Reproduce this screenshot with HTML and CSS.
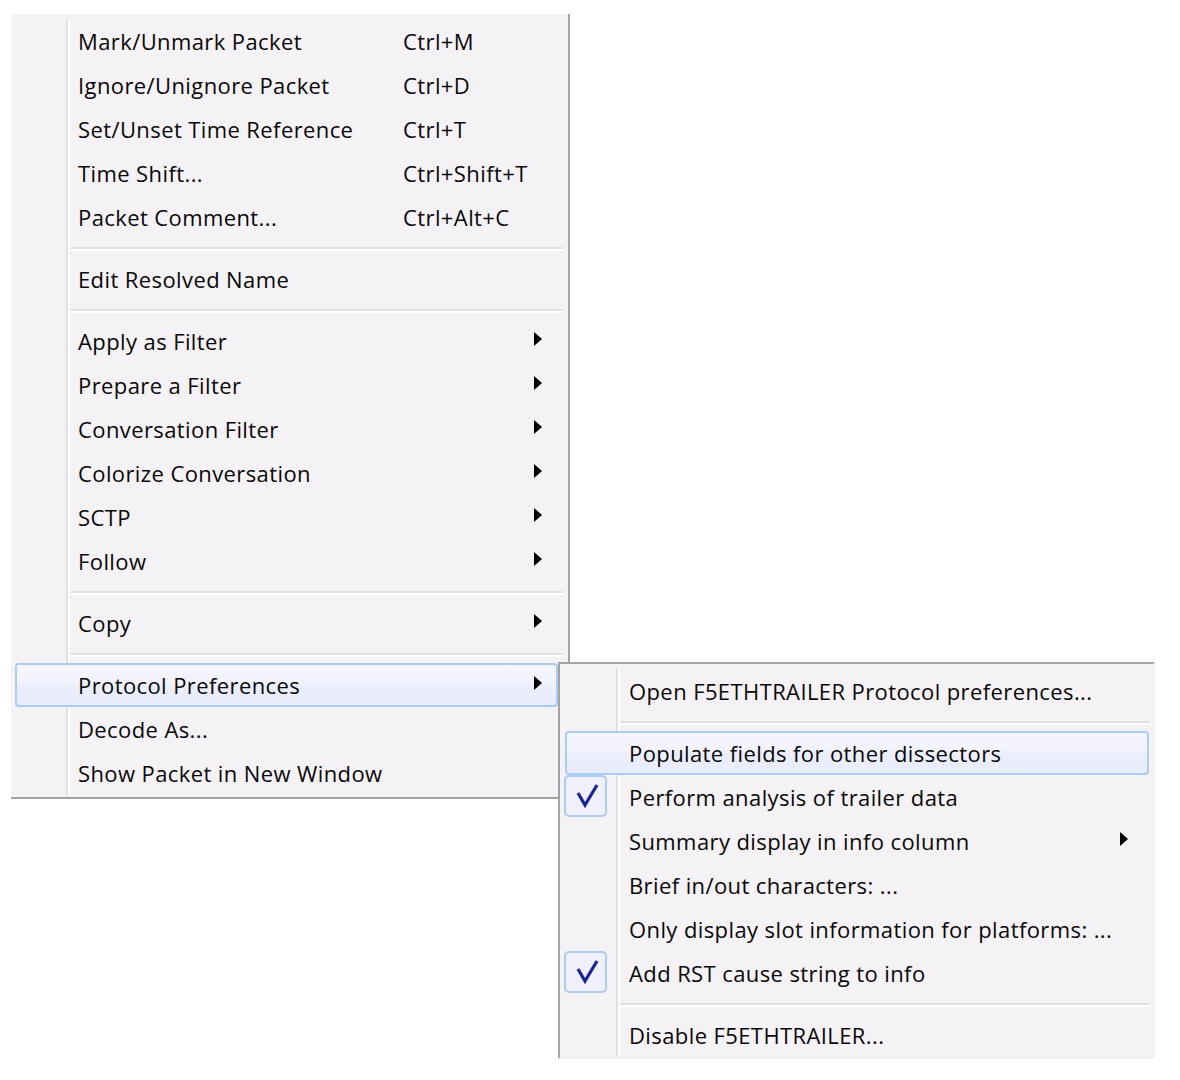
FILE: index.html
```html
<!DOCTYPE html>
<html>
<head>
<meta charset="utf-8">
<link rel="stylesheet" href="styles.css">
</head>
<body>
<div class="menu main">
  <div class="list">
    <div class="item"><span class="label">Mark/Unmark Packet</span><span class="key">Ctrl+M</span></div>
    <div class="item"><span class="label">Ignore/Unignore Packet</span><span class="key">Ctrl+D</span></div>
    <div class="item"><span class="label">Set/Unset Time Reference</span><span class="key">Ctrl+T</span></div>
    <div class="item"><span class="label">Time Shift...</span><span class="key">Ctrl+Shift+T</span></div>
    <div class="item"><span class="label">Packet Comment...</span><span class="key">Ctrl+Alt+C</span></div>
    <div class="sep"></div>
    <div class="item"><span class="label">Edit Resolved Name</span></div>
    <div class="sep"></div>
    <div class="item"><span class="label">Apply as Filter</span><span class="arrow"></span></div>
    <div class="item"><span class="label">Prepare a Filter</span><span class="arrow"></span></div>
    <div class="item"><span class="label">Conversation Filter</span><span class="arrow"></span></div>
    <div class="item"><span class="label">Colorize Conversation</span><span class="arrow"></span></div>
    <div class="item"><span class="label">SCTP</span><span class="arrow"></span></div>
    <div class="item"><span class="label">Follow</span><span class="arrow"></span></div>
    <div class="sep"></div>
    <div class="item"><span class="label">Copy</span><span class="arrow"></span></div>
    <div class="sep"></div>
    <div class="item hl"><span class="label">Protocol Preferences</span><span class="arrow"></span></div>
    <div class="item"><span class="label">Decode As...</span></div>
    <div class="item"><span class="label">Show Packet in New Window</span></div>
  </div>
</div>

<div class="menu sub">
  <div class="list">
    <div class="item"><span class="gut"></span><span class="label">Open F5ETHTRAILER Protocol preferences...</span></div>
    <div class="sep"></div>
    <div class="item hl"><span class="gut"></span><span class="label">Populate fields for other dissectors</span></div>
    <div class="item"><span class="gut"><span class="check"><svg width="39" height="38" viewBox="0 0 39 38"><polyline points="12,16 19,28 31,8" fill="none" stroke="#1c2494" stroke-width="3.2" stroke-linejoin="miter"/></svg></span></span><span class="label">Perform analysis of trailer data</span></div>
    <div class="item"><span class="gut"></span><span class="label">Summary display in info column</span><span class="arrow"></span></div>
    <div class="item"><span class="gut"></span><span class="label">Brief in/out characters: ...</span></div>
    <div class="item"><span class="gut"></span><span class="label">Only display slot information for platforms: ...</span></div>
    <div class="item"><span class="gut"><span class="check"><svg width="39" height="38" viewBox="0 0 39 38"><polyline points="12,16 19,28 31,8" fill="none" stroke="#1c2494" stroke-width="3.2" stroke-linejoin="miter"/></svg></span></span><span class="label">Add RST cause string to info</span></div>
    <div class="sep"></div>
    <div class="item"><span class="gut"></span><span class="label">Disable F5ETHTRAILER...</span></div>
  </div>
</div>
</body>
</html>
```

FILE: styles.css
```css
html, body {
  margin: 0;
  padding: 0;
  background: #ffffff;
}

body {
  font-family: "Open Sans", "DejaVu Sans", sans-serif;
  font-size: 22px;
  letter-spacing: 0.4px;
  color: #080808;
}

.menu {
  background: #f5f2f5;
  box-sizing: border-box;
}

.main {
  margin: 14px 0 0 11px;
  width: 559px;
  padding: 5px 0 2px 0;
  border-right: 2px solid #a3a3a3;
  border-bottom: 2px solid #a3a3a3;
}

.main .list {
  background: linear-gradient(to right, transparent 55px, #e2dfe2 55px, #e2dfe2 57px, #ffffff 57px, #ffffff 59px, transparent 59px);
}

.sub {
  position: absolute;
  left: 558px;
  top: 662px;
  width: 597px;
  padding: 5px 0 0 0;
  border-top: 2px solid #a3a3a3;
  border-left: 2px solid #a3a3a3;
  border-right: 2px solid #f1f1f1;
  border-bottom: 2px solid #f1f1f1;
}

.sub .list {
  background: linear-gradient(to right, transparent 56px, #e2dfe2 56px, #e2dfe2 58px, #ffffff 58px, #ffffff 60px, transparent 60px);
}

.item {
  display: flex;
  align-items: center;
  height: 44px;
  white-space: nowrap;
  border-radius: 4px;
}

.main .item {
  margin: 0 10px 0 4px;
  padding-left: 63px;
}

.sub .item {
  margin: 0 4px 0 5px;
}

.hl {
  background: linear-gradient(to bottom, #f6f6fd 0%, #f1f2fd 48%, #eaeefc 52%, #e8ecfc 100%);
  box-shadow: inset 0 0 0 2px #a9cdf4;
}

.main .label {
  flex: 0 0 325px;
}

.key {
  flex: none;
}

.arrow {
  flex: none;
  margin-left: auto;
  margin-bottom: 4px;
  width: 0;
  height: 0;
  border-left: 8px solid #000;
  border-top: 7px solid transparent;
  border-bottom: 7px solid transparent;
}

.main .arrow {
  margin-right: 16px;
}

.sub .arrow {
  margin-right: 21px;
}

.gut {
  flex: 0 0 64px;
  align-self: stretch;
  display: flex;
  align-items: flex-start;
}

.check {
  display: block;
  box-sizing: border-box;
  width: 43px;
  height: 42px;
  margin-left: -1px;
  border: 2px solid #a9cdf4;
  border-radius: 5px;
  background: #f0f0fb;
}

.check svg {
  display: block;
}

.sep {
  height: 0;
  border-top: 2px solid #e2dfe2;
  border-bottom: 2px solid #ffffff;
  margin-top: 8px;
  margin-bottom: 6px;
}

.main .sep {
  margin-left: 59px;
  margin-right: 5px;
}

.sub .sep {
  margin-left: 60px;
  margin-right: 3px;
}
```
